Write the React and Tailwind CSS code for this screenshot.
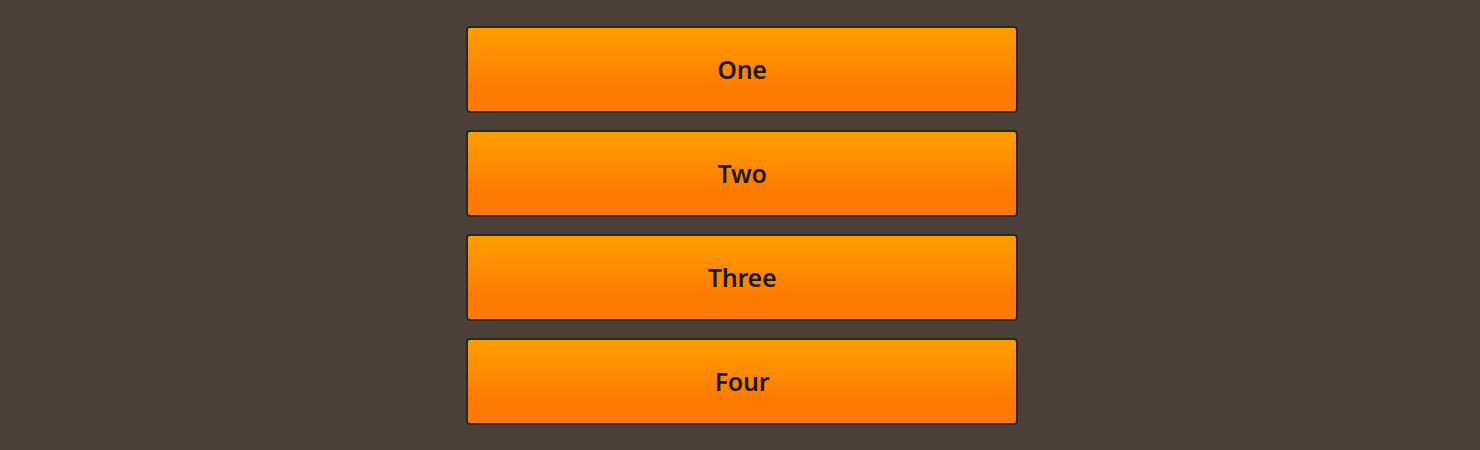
import React from 'react'

const items = ['One', 'Two', 'Three', 'Four']

export default function App() {
  return (
    <div className="min-h-[450px] bg-[#4a4037] pt-[26px]" style={{ fontFamily: '"Noto Sans", sans-serif' }}>
      <div className="ml-[466px] flex w-[552px] flex-col gap-[17px]">
        {items.map(label => (
          <button
            key={label}
            className="flex h-[87px] items-center justify-center rounded-[4px] border-2 border-[#2b2622] bg-gradient-to-b from-[#ff9e00] via-[#ff7b00] via-70% to-[#ff7800] pt-[1px] text-[25px] font-semibold tracking-[-0.01em] text-[#1c1a17]"
          >
            {label}
          </button>
        ))}
      </div>
    </div>
  )
}
